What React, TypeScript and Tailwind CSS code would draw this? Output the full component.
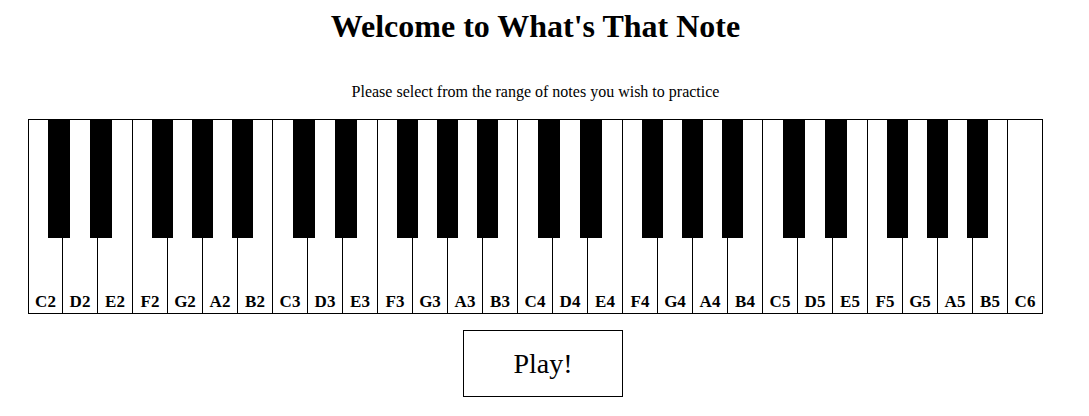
const WHITE_NOTES = ["C", "D", "E", "F", "G", "A", "B"];

const whiteKeys: string[] = [];
for (let octave = 2; octave <= 5; octave++) {
  for (const n of WHITE_NOTES) whiteKeys.push(`${n}${octave}`);
}
whiteKeys.push("C6");

// offsets inside one octave (245px), measured from the keyboard's inner left edge
const BLACK_OFFSETS = [
  { name: "C#", left: 19, width: 22 },
  { name: "D#", left: 61, width: 22 },
  { name: "F#", left: 123, width: 21 },
  { name: "G#", left: 163, width: 21 },
  { name: "A#", left: 203, width: 21 },
];

const blackKeys = [2, 3, 4, 5].flatMap((octave, i) =>
  BLACK_OFFSETS.map((b) => ({
    id: `${b.name}${octave}`,
    left: i * 245 + b.left,
    width: b.width,
  }))
);

function Keyboard() {
  return (
    <div className="relative mx-auto mt-[18px] h-[195px] w-[1015px] border border-black bg-white">
      <div className="grid h-full grid-cols-[34px_repeat(27,35px)_34px]">
        {whiteKeys.map((note, i) => (
          <button
            key={note}
            className={`flex h-full items-end justify-center bg-white pb-[2px] text-[17px] font-bold leading-[18px] text-black ${
              i < whiteKeys.length - 1 ? "border-r border-black" : ""
            }`}
          >
            {note}
          </button>
        ))}
      </div>
      {blackKeys.map((k) => (
        <div
          key={k.id}
          className="absolute top-0 h-[118px] bg-black"
          style={{ left: k.left, width: k.width }}
        />
      ))}
    </div>
  );
}

export default function App() {
  return (
    <div className="w-[1071px] bg-white pt-2 font-['Liberation_Serif',serif] text-black">
      <h1 className="text-center text-[32px] font-bold leading-[37px]">Welcome to What's That Note</h1>
      <p className="mt-[38px] text-center text-[16px] leading-[18px]">
        Please select from the range of notes you wish to practice
      </p>
      <Keyboard />
      <button className="ml-[463px] mt-[16px] h-[67px] w-[160px] border border-black bg-white text-[28px] leading-[32px] text-black">
        Play!
      </button>
    </div>
  );
}
